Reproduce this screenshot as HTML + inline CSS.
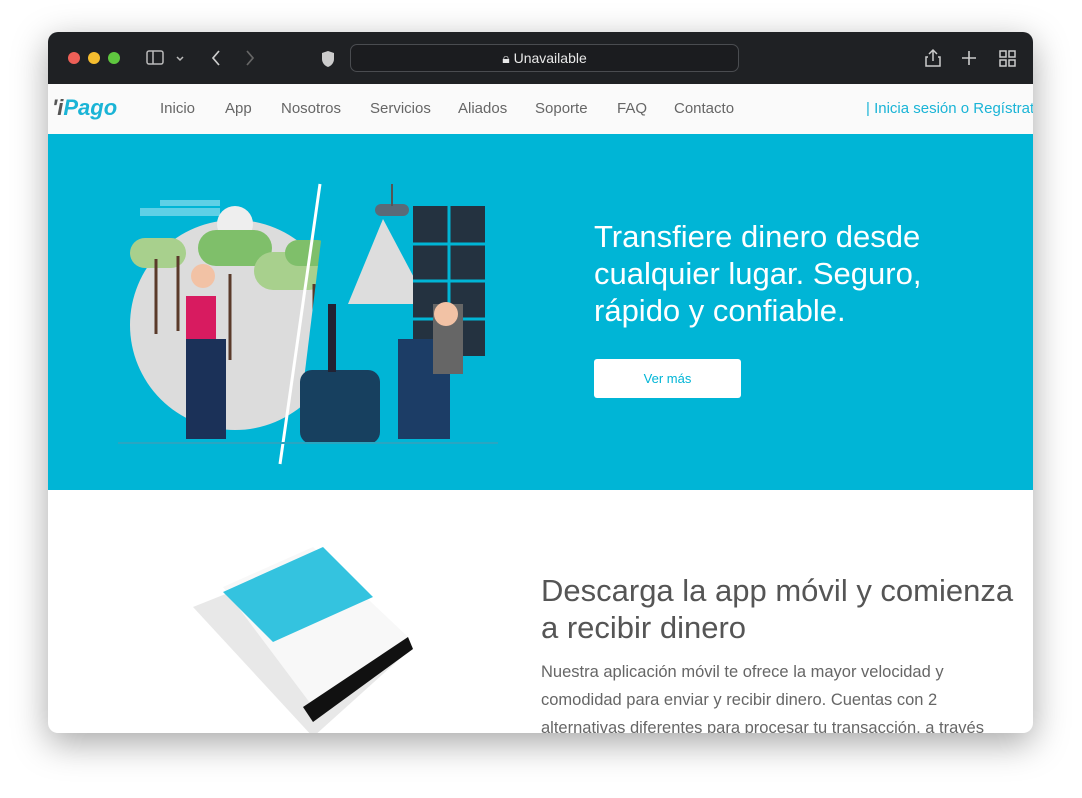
<!DOCTYPE html>
<html><head><meta charset="utf-8"><style>
*{margin:0;padding:0;box-sizing:border-box}
body{width:1082px;height:798px;background:#fff;font-family:"Liberation Sans",sans-serif;position:relative;overflow:hidden}
.win{position:absolute;left:48px;top:32px;width:985px;height:701px;border-radius:10px;overflow:hidden;box-shadow:0 10px 35px rgba(0,0,0,.35);background:#fff}
.tb{height:52px;background:#1f2124;position:relative}
.dot{position:absolute;top:20px;width:12px;height:12px;border-radius:50%}
.url{position:absolute;left:302px;top:12px;width:389px;height:28px;border:1px solid #4a4c50;border-radius:7px;background:#1b1c1f;color:#e8e8e8;font-size:14px;text-align:center;line-height:26px}
.nav{height:50px;background:#fafafa;position:relative;color:#666;font-size:15px}
.nav span{position:absolute;top:16px}
.hero{height:356px;background:#00b5d6;position:relative}
.h1{position:absolute;left:546px;top:84px;color:#fff;font-size:31px;line-height:37px;font-weight:300}
.btn{position:absolute;left:546px;top:225px;width:147px;height:39px;background:#fff;border-radius:3px;color:#00b5d6;font-size:13px;text-align:center;line-height:39px}
.h2{position:absolute;left:493px;color:#555;font-size:31px;line-height:37px}
.p{position:absolute;left:493px;color:#666;font-size:16.5px;line-height:28px;width:450px}
</style></head><body>
<div class="win">
<div class="tb">
<div class="dot" style="left:20px;background:#ed5f57"></div>
<div class="dot" style="left:40px;background:#f5bd2f"></div>
<div class="dot" style="left:60px;background:#5fc73f"></div>
<svg style="position:absolute;left:98px;top:17px" width="60" height="18"><rect x="1" y="2" width="16" height="13" rx="2" fill="none" stroke="#bbb" stroke-width="1.5"/><line x1="7" y1="2" x2="7" y2="15" stroke="#bbb" stroke-width="1.5"/><path d="M31 8l3 3 3-3" stroke="#bbb" fill="none" stroke-width="1.5"/></svg>
<svg style="position:absolute;left:160px;top:17px" width="50" height="18"><path d="M11 2l-6 7 6 7" stroke="#ccc" fill="none" stroke-width="1.7"/><path d="M39 2l6 7-6 7" stroke="#666" fill="none" stroke-width="1.7"/></svg>
<svg style="position:absolute;left:272px;top:18px" width="16" height="18"><path d="M8 1l6 2v6c0 4-3 7-6 8-3-1-6-4-6-8V3z" fill="#ccc"/></svg>
<div class="url">🔒︎ Unavailable</div>
<svg style="position:absolute;left:875px;top:16px" width="100" height="20"><path d="M10 2v11M6 6l4-4 4 4M5 9H3v9h14V9h-2" stroke="#ccc" fill="none" stroke-width="1.5"/><path d="M46 3v14M39 10h14" stroke="#ccc" stroke-width="1.6"/><g fill="none" stroke="#ccc" stroke-width="1.5"><rect x="77" y="3" width="6" height="6"/><rect x="86" y="3" width="6" height="6"/><rect x="77" y="12" width="6" height="6"/><rect x="86" y="12" width="6" height="6"/></g></svg>
</div>
<div class="nav">
<span style="left:4px;top:11px;font-size:22px;font-weight:bold;font-style:italic;color:#1ab4d6"><span style="position:static;color:#555">'i</span>Pago</span>
<span style="left:112px">Inicio</span><span style="left:177px">App</span><span style="left:233px">Nosotros</span><span style="left:322px">Servicios</span><span style="left:410px">Aliados</span><span style="left:487px">Soporte</span><span style="left:569px">FAQ</span><span style="left:626px">Contacto</span>
<span style="left:818px;color:#1ab4d6;white-space:nowrap">| Inicia sesión o Regístrate</span>
</div>
<div class="hero">
<svg width="440" height="356" style="position:absolute;left:30px;top:0">
<rect x="62" y="74" width="80" height="8" fill="#5fd0e6"/><rect x="82" y="66" width="60" height="6" fill="#5fd0e6"/>
<circle cx="157" cy="191" r="105" fill="#dcdcdc"/>
<circle cx="157" cy="90" r="18" fill="#eee"/>
<rect x="52" y="104" width="56" height="30" rx="15" fill="#a8d08d"/><rect x="120" y="96" width="74" height="36" rx="18" fill="#7fbf6a"/><rect x="176" y="118" width="74" height="38" rx="19" fill="#a8d08d"/><rect x="207" y="106" width="45" height="26" rx="13" fill="#7fbf6a"/>
<path d="M78 125v75M100 122v75M152 140v86M236 150v100" stroke="#5a3a2a" stroke-width="3"/>
<path d="M242 50L202 330" stroke="#fff" stroke-width="3"/>
<path d="M215 335L250 50H440V356H215Z" fill="#00b5d6"/>
<path d="M305 85L270 170H350Z" fill="#ddd"/><rect x="297" y="70" width="34" height="12" rx="6" fill="#5a6a78"/><line x1="314" y1="50" x2="314" y2="72" stroke="#555" stroke-width="2"/>
<rect x="335" y="72" width="72" height="150" fill="#243240"/>
<path d="M371 72v150M335 110h72M335 147h72M335 185h72" stroke="#00b5d6" stroke-width="3"/>
<rect x="222" y="236" width="80" height="74" rx="12" fill="#17405f"/><rect x="250" y="170" width="8" height="68" fill="#223"/>
<rect x="320" y="205" width="52" height="100" fill="#1c3d66"/><rect x="355" y="170" width="30" height="70" fill="#666"/><circle cx="368" cy="180" r="12" fill="#f2c2a5"/>
<rect x="108" y="162" width="30" height="48" fill="#d81b60"/><rect x="108" y="205" width="40" height="100" fill="#1b3158"/><circle cx="125" cy="142" r="12" fill="#f2c2a5"/>
<rect x="40" y="308" width="380" height="2" fill="#29a6c2"/>
</svg>
<div class="h1">Transfiere dinero desde<br>cualquier lugar. Seguro,<br>rápido y confiable.</div>
<div class="btn">Ver más</div>
</div>
<svg width="240" height="200" style="position:absolute;left:135px;top:505px">
<path d="M10 70L110 30L230 110L130 200Z" fill="#e8e8e8"/><path d="M40 50L130 10L225 100L130 170Z" fill="#f8f8f8"/><path d="M40 55L140 10L190 60L90 105Z" fill="#34c3df"/><path d="M120 170L225 100L230 112L130 185Z" fill="#111"/>
</svg>
<div class="h2" style="top:540px">Descarga la app móvil y comienza<br>a recibir dinero</div>
<div class="p" style="top:626px">Nuestra aplicación móvil te ofrece la mayor velocidad y comodidad para enviar y recibir dinero. Cuentas con 2 alternativas diferentes para procesar tu transacción, a través</div>
</div>
</body></html>
